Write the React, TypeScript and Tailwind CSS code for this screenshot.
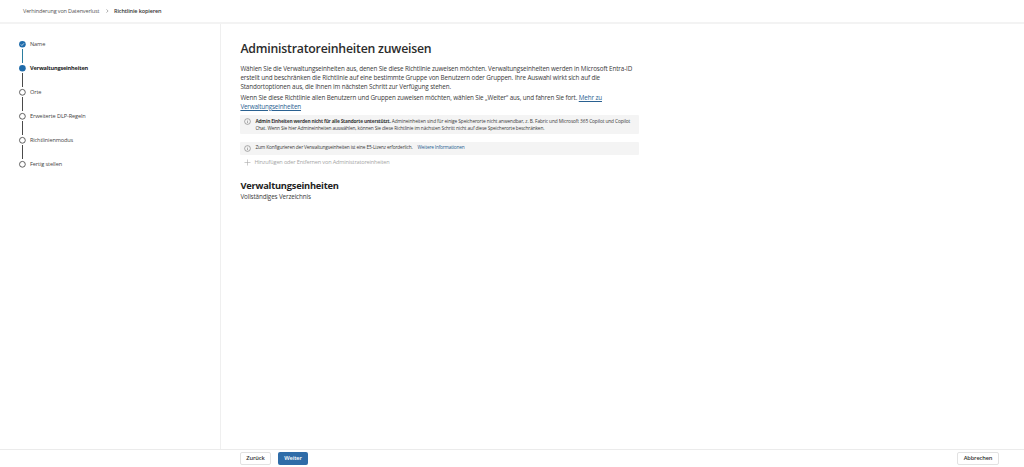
import React from 'react';

type StepState = 'done' | 'current' | 'open';

interface Step {
  label: string;
  state: StepState;
  tracking: string;
}

const steps: Step[] = [
  { label: 'Name', state: 'done', tracking: 'tracking-[-0.1px]' },
  { label: 'Verwaltungseinheiten', state: 'current', tracking: 'tracking-[-0.19px]' },
  { label: 'Orte', state: 'open', tracking: 'tracking-[-0.1px]' },
  { label: 'Erweiterte DLP-Regeln', state: 'open', tracking: 'tracking-[-0.12px]' },
  { label: 'Richtlinienmodus', state: 'open', tracking: 'tracking-[-0.14px]' },
  { label: 'Fertig stellen', state: 'open', tracking: 'tracking-[-0.1px]' },
];

function StepMarker({ state }: { state: StepState }) {
  return (
    <svg width="8" height="8" viewBox="0 0 8 8" fill="none" className="block shrink-0">
      {state === 'open' ? (
        <circle cx="4.4" cy="4.3" r="2.9" stroke="#505050" strokeWidth="0.9" />
      ) : (
        <circle cx="4.4" cy="4.3" r="3.3" fill="#1f6cab" />
      )}
      {state === 'done' && (
        <path d="M2.8 4.4l1.1 1.1L6 3.3" stroke="#fff" strokeWidth="0.7" />
      )}
    </svg>
  );
}

function InfoIcon() {
  return (
    <svg width="7" height="7" viewBox="0 0 7 7" fill="none" className="block shrink-0">
      <circle cx="3.5" cy="3.5" r="2.9" stroke="#777" strokeWidth="0.6" />
      <path d="M3.5 3.1v2M3.5 1.8v.6" stroke="#777" strokeWidth="0.6" />
    </svg>
  );
}

function Breadcrumb() {
  return (
    <header className="flex h-6 shrink-0 items-center border-b-2 border-[#f3f3f3] pl-[23px] text-[5.5px] whitespace-nowrap text-[#555]">
      <span className="w-[83px] tracking-[-0.14px]">Verhinderung von Datenverlust</span>
      <svg width="3" height="4" viewBox="0 0 3 4" fill="none" className="mr-[5px]">
        <path d="M.5.4l1.6 1.6L.5 3.6" stroke="#777" strokeWidth="0.6" />
      </svg>
      <span className="font-semibold tracking-[-0.13px] text-[#333]">Richtlinie kopieren</span>
    </header>
  );
}

function Stepper() {
  return (
    <nav className="w-[221px] shrink-0 border-r border-[#efefef] pl-[18px] pt-4">
      {steps.map((step, i) => (
        <div key={step.label} className="flex h-6">
          <div className="mr-1 flex w-2 flex-col items-center">
            <div className="h-2">
              <StepMarker state={step.state} />
            </div>
            {i < steps.length - 1 && (
              <div className={`mt-px h-3.5 w-px ${step.state === 'done' ? 'bg-[#2b7d9f]' : 'bg-[#4a4a4a]'}`} />
            )}
          </div>
          <span
            className={`h-2 text-[5.6px] leading-[9px] ${step.tracking} ${
              step.state === 'current' ? 'font-bold text-[#222]' : 'text-[#444]'
            }`}
          >
            {step.label}
          </span>
        </div>
      ))}
    </nav>
  );
}

function Content() {
  return (
    <main className="w-[420px] pl-[19.4px] pt-[17px] whitespace-nowrap text-[#3a3a3a]">
      <h1 className="h-4 text-[12.3px] leading-4 font-semibold tracking-[-0.22px] text-[#2b2b2b]">Administratoreinheiten zuweisen</h1>

      <div className="mt-2 text-[6.3px] leading-[8.8px] tracking-[-0.12px]">
        <p>Wählen Sie die Verwaltungseinheiten aus, denen Sie diese Richtlinie zuweisen möchten. Verwaltungseinheiten werden in Microsoft Entra-ID</p>
        <p>erstellt und beschränken die Richtlinie auf eine bestimmte Gruppe von Benutzern oder Gruppen. Ihre Auswahl wirkt sich auf die</p>
        <p>Standortoptionen aus, die Ihnen im nächsten Schritt zur Verfügung stehen.</p>
      </div>
      <div className="mt-[2.6px] text-[6.3px] leading-[8.8px] tracking-[-0.12px]">
        <p>
          Wenn Sie diese Richtlinie allen Benutzern und Gruppen zuweisen möchten, wählen Sie „Weiter“ aus, und fahren Sie fort.{' '}
          <a className="text-[#2a6191] underline">Mehr zu</a>
        </p>
        <p className="tracking-[-0.16px]"><a className="text-[#2a6191] underline">Verwaltungseinheiten</a></p>
      </div>

      <div className="mt-[3.4px] flex h-[19px] w-[399px] gap-1 rounded-[1px] bg-[#f4f4f4] pl-[4px] pt-[3px] text-[4.8px] leading-[6.8px]">
        <InfoIcon />
        <div>
          <p className="tracking-[-0.105px]">
            <b className="tracking-[-0.185px]">Admin Einheiten werden nicht für alle Standorte unterstützt.</b> Admineinheiten sind für einige Speicherorte nicht anwendbar, z. B. Fabric und Microsoft 365 Copilot und Copilot
          </p>
          <p className="tracking-[-0.135px]">Chat. Wenn Sie hier Admineinheiten auswählen, können Sie diese Richtlinie im nächsten Schritt nicht auf diese Speicherorte beschränken.</p>
        </div>
      </div>

      <div className="mt-[7.6px] flex h-[13px] w-[399px] items-center rounded-[1px] bg-[#f4f4f4] pl-[4px] text-[4.8px]">
        <InfoIcon />
        <span className="ml-1 tracking-[-0.155px]">Zum Konfigurieren der Verwaltungseinheiten ist eine E5-Lizenz erforderlich.</span>
        <a className="ml-[5px] tracking-[-0.185px] text-[#2a6191]">Weitere Informationen</a>
      </div>

      <div className="mt-[3px] flex h-2.5 items-center pl-[4px] text-[5.6px] tracking-[-0.17px] text-[#a6a6a6]">
        <svg width="7" height="7" viewBox="0 0 7 7" fill="none" className="mr-[3px]">
          <path d="M3.5.5v6M.5 3.5h6" stroke="#aaa" strokeWidth="0.6" />
        </svg>
        <span>Hinzufügen oder Entfernen von Administratoreinheiten</span>
      </div>

      <h2 className="mt-3 h-3 text-[9.3px] leading-3 font-bold tracking-[-0.23px] text-[#222]">Verwaltungseinheiten</h2>
      <p className="text-[6.3px] leading-[9px] tracking-[-0.13px]">Vollständiges Verzeichnis</p>
    </main>
  );
}

function Footer() {
  return (
    <footer className="flex h-[18px] shrink-0 items-start border-t border-[#ebebeb] pr-[25px] pl-[240px] pt-[2px] text-[5.7px] font-semibold text-[#333]">
      <button className="h-[13px] w-[31px] rounded-[2px] border border-[#e2e2e2] leading-[11px] tracking-[-0.1px]">Zurück</button>
      <button className="ml-[7px] h-[13px] w-[30px] rounded-[2px] bg-[#2f6ca8] leading-[13px] tracking-[-0.1px] text-white">Weiter</button>
      <button className="ml-auto h-[13px] w-[42px] rounded-[2px] border border-[#e2e2e2] leading-[11px] tracking-[-0.15px]">Abbrechen</button>
    </footer>
  );
}

export default function App() {
  return (
    <div className="flex h-[467px] w-[1024px] flex-col overflow-hidden bg-white font-['Open_Sans','Noto_Sans',sans-serif]">
      <Breadcrumb />
      <div className="flex min-h-0 flex-1">
        <Stepper />
        <Content />
      </div>
      <Footer />
    </div>
  );
}
